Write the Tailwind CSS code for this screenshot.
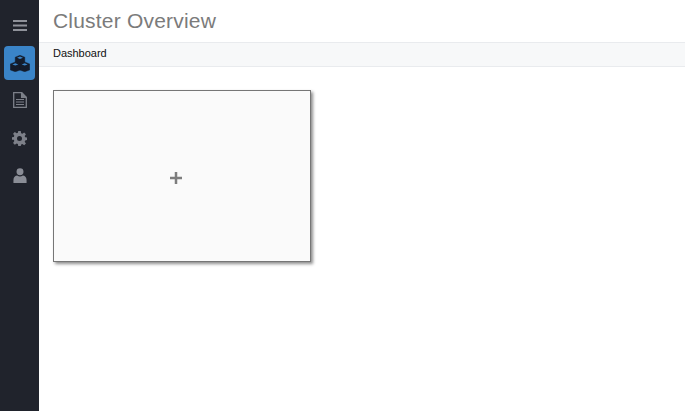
<!DOCTYPE html>
<html>
<head>
<meta charset="utf-8">
<script src="https://cdn.jsdelivr.net/npm/@tailwindcss/browser@4"></script>
</head>
<body class="bg-white font-['Liberation_Sans',sans-serif] overflow-hidden">
<div class="flex h-[411px] w-[685px]">
  <nav class="w-[39px] shrink-0 bg-[#20232c] flex flex-col items-center pt-[20px]">
    <svg class="block w-[14px] h-[11px] ml-[1px]" viewBox="0 0 14 11"><path d="M0 0h14v2H0zM0 4.500h14v2H0zM0 9h14v2H0z" fill="#8f929a"/></svg>
    <div class="mt-[15px] w-[31px] h-[34px] rounded-[4px] bg-[#3a84c8] flex items-center justify-center">
      <svg class="w-[20px] h-[17px]" viewBox="0 0 20 17" fill="#141b2a" stroke="#141b2a" stroke-width=".4" stroke-linejoin="round"><path d="M10 .3l4.800 1.900v5.100L10 9.200 5.200 7.300V2.200z"/><path d="M5.300 7l5 1.900v6l-5 1.900-5-1.900v-6z"/><path d="M14.700 7l5 1.900v6l-5 1.900-5-1.900v-6z"/><path fill="#3a84c8" stroke="none" d="M10 1.500l3 1.200-3 1.200-3-1.200zM5.300 8.200l3 1.200-3 1.200-3-1.200zM14.700 8.200l3 1.200-3 1.200-3-1.200z"/></svg>
    </div>
    <svg class="mt-[12px] w-[14px] h-[16px] ml-[1px]" viewBox="0 0 14 16" fill="none" stroke="#7d8089" stroke-width="1.300"><path d="M.7.700h8.100l4.500 4.500v10.100H.7z"/><path d="M8.600.700v4.700h4.700" fill="#7d8089"/><path d="M3 7.500h8M3 10h8M3 12.500h8" stroke-width="1.100"/></svg>
    <svg class="mt-[23px] w-[15px] h-[15px]" viewBox="0 0 24 24" fill="#7d8089"><path fill-rule="evenodd" d="M10 0h4l.6 3.400 2 .8L19.500 2.200l2.800 2.800-2 2.900.8 2 3.400.6v4l-3.400.6-.8 2 2 2.900-2.800 2.800-2.900-2-2 .8L14 24h-4l-.6-3.400-2-.8-2.900 2-2.800-2.800 2-2.900-.8-2L-.5 14v-4l3.400-.6.8-2-2-2.900 2.800-2.800 2.900 2 2-.8zM12 8a4 4 0 100 8 4 4 0 000-8z"/></svg>
    <svg class="mt-[22px] w-[14px] h-[15px] ml-[1px]" viewBox="0 0 14 16" fill="#8a8d96"><circle cx="7" cy="4" r="3.700"/><path d="M0 16v-3.200C0 9.800 2 8 4 8c1 .7 2 1 3 1s2-.3 3-1c2 0 4 1.800 4 4.800V16z"/></svg>
  </nav>
  <main class="flex-1 min-w-0">
    <h1 class="h-[42px] pl-[14px] pt-[9px] text-[21px] leading-[24px] text-[#7b7b7b] font-normal tracking-[0.2px]">Cluster Overview</h1>
    <div class="h-[25px] bg-[#f7f8f9] border-y border-[#e9ebee] pl-[14px] text-[11px] leading-[21px] tracking-[-0.02px] text-[#111111]">Dashboard</div>
    <div class="mt-[23px] ml-[14px] w-[258px] h-[172px] bg-[#fafafa] border border-[#767676] shadow-[2px_2px_3px_rgba(0,0,0,0.45)] relative flex items-center justify-center">
      <svg class="w-[12px] h-[12px] -translate-x-[6px] translate-y-[2px]" viewBox="0 0 12 12"><path d="M4.750 0h2.500v4.750H12v2.500H7.250V12h-2.500V7.250H0v-2.500h4.750z" fill="#7d7d7d"/></svg>
    </div>
  </main>
</div>
</body>
</html>
